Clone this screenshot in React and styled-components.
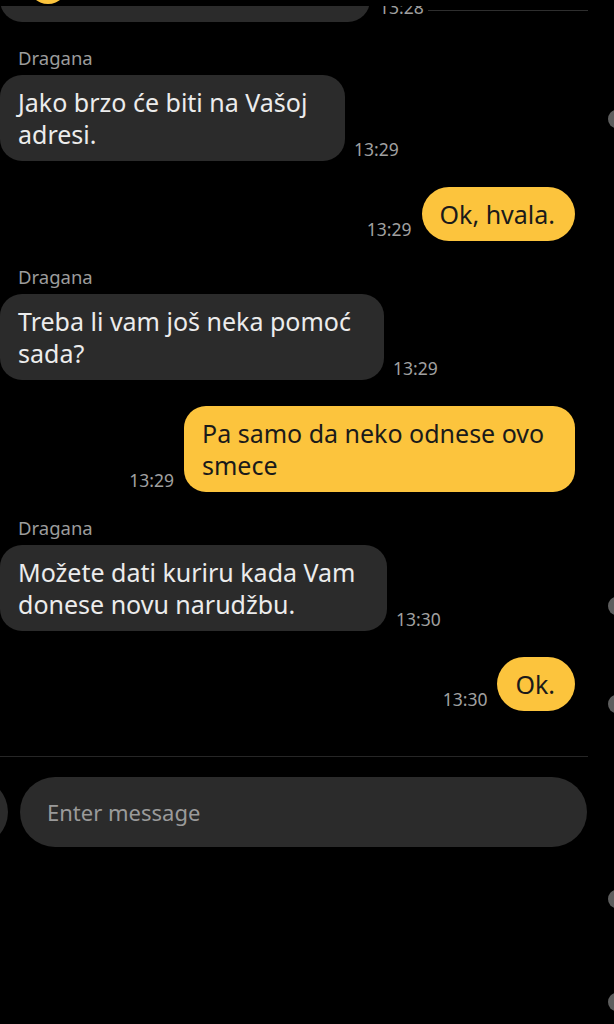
import React from 'react'
import styled, { createGlobalStyle } from 'styled-components'

const GlobalStyle = createGlobalStyle`
  html, body {
    margin: 0;
    padding: 0;
    background: #000;
  }
  body {
    font-family: 'Noto Sans', 'Open Sans', sans-serif;
    color: #ececec;
  }
`

const Screen = styled.div`
  position: relative;
  width: 614px;
  height: 1024px;
  overflow: hidden;
  background: #000;
`

const Header = styled.div`
  position: absolute;
  top: 0;
  left: 0;
  right: 0;
  height: 6px;
  background: #000;
  z-index: 2;
`

const Avatar = styled.div`
  position: absolute;
  left: 28px;
  top: -36px;
  width: 40px;
  height: 40px;
  border-radius: 50%;
  background: #fcc43d;
`

const HeaderLine = styled.div`
  position: absolute;
  left: 428px;
  top: 10px;
  width: 160px;
  height: 1px;
  background: #2e2e2e;
`

const Clip = styled.div`
  height: 22px;
  overflow: hidden;
  display: flex;
  flex-direction: column;
  justify-content: flex-end;
`

const Chat = styled.div`
  display: flex;
  flex-direction: column;
  gap: 26px;
  padding-right: 39px;
`

const Group = styled.div`
  display: flex;
  flex-direction: column;
`

const Name = styled.div`
  font-size: 18.5px;
  line-height: 20px;
  color: #9c9c9c;
  padding-left: 18px;
  margin-bottom: 7px;
`

const Row = styled.div`
  display: flex;
  align-items: flex-end;
  justify-content: flex-start;
  flex-direction: ${p => (p.$out ? 'row-reverse' : 'row')};
  gap: ${p => (p.$out ? '10px' : '9px')};
`

const Bubble = styled.div`
  background: ${p => (p.$out ? '#fcc43d' : '#2b2b2b')};
  color: ${p => (p.$out ? '#1a1a1a' : '#ececec')};
  border-radius: ${p => (p.$tall ? '22px' : '27px')};
  padding: 11px 20px 11px 18px;
  font-size: 25px;
  line-height: 32px;
  white-space: pre-line;
  box-sizing: border-box;
  width: ${p => p.$w || 'auto'};
`

const Stub = styled(Bubble)`
  width: 370px;
  height: 60px;
  border-radius: 22px;
`

const Time = styled.div`
  font-size: 17.5px;
  line-height: 18px;
  color: #a0a0a0;
  margin-bottom: ${p => p.$mb || '3px'};
  flex-shrink: 0;
`

const Divider = styled.div`
  height: 1px;
  width: 588px;
  background: #262626;
  margin-top: 45px;
`

const Composer = styled.div`
  display: flex;
  align-items: center;
  gap: 12px;
  margin-top: 20px;
  margin-left: -60px;
`

const RoundButton = styled.div`
  width: 68px;
  height: 68px;
  border-radius: 50%;
  background: #2b2b2b;
  flex-shrink: 0;
`

const Input = styled.div`
  width: 567px;
  height: 70px;
  border-radius: 35px;
  background: #2b2b2b;
  display: flex;
  align-items: center;
  padding-left: 27px;
  box-sizing: border-box;
  font-size: 22px;
  color: #9a9a9a;
`

const EdgeDot = styled.div`
  position: absolute;
  right: -10px;
  width: 16px;
  height: 18px;
  border-radius: 50%;
  background: #5e5e5e;
`

const messages = [
  { who: 'Dragana', text: 'Jako brzo će biti na Vašoj\nadresi.', time: '13:29', w: '345px' },
  { out: true, text: 'Ok, hvala.', time: '13:29' },
  { who: 'Dragana', text: 'Treba li vam još neka pomoć\nsada?', time: '13:29', w: '384px' },
  { out: true, text: 'Pa samo da neko odnese ovo\nsmece', time: '13:29', w: '391px' },
  { who: 'Dragana', text: 'Možete dati kuriru kada Vam\ndonese novu narudžbu.', time: '13:30', w: '387px' },
  { out: true, text: 'Ok.', time: '13:30' },
]

const dots = [110, 597, 695, 890, 993]

const App = () => {
  return (
    <Screen>
      <GlobalStyle />
      <Header>
        <Avatar />
      </Header>
      <HeaderLine />
      <Chat>
        <Clip>
          <Row>
            <Stub />
            <Time $mb="6px">13:28</Time>
          </Row>
        </Clip>
        {messages.map((m, i) => (
          <Group key={i}>
            {m.who && <Name>{m.who}</Name>}
            <Row $out={m.out}>
              <Bubble $out={m.out} $tall={m.text.includes('\n')} $w={m.w}>
                {m.text}
              </Bubble>
              <Time>{m.time}</Time>
            </Row>
          </Group>
        ))}
      </Chat>
      <Divider />
      <Composer>
        <RoundButton />
        <Input>Enter message</Input>
      </Composer>
      {dots.map(y => (
        <EdgeDot key={y} style={{ top: y }} />
      ))}
    </Screen>
  )
}

export default App
